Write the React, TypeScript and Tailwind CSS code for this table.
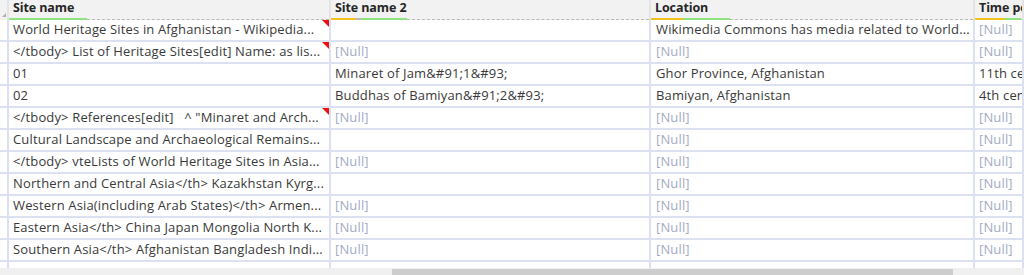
import React from 'react';

type Cell = { text: string; nul?: boolean; mark?: boolean };

const N: Cell = { text: '[Null]', nul: true };
const E: Cell = { text: '' };

const rows: Cell[][] = [
  [{ text: 'World Heritage Sites in Afghanistan - Wikipedia...', mark: true }, E, { text: 'Wikimedia Commons has media related to World...' }, N],
  [{ text: '</tbody> List of Heritage Sites[edit] Name: as lis...', mark: true }, N, N, N],
  [{ text: '01' }, { text: 'Minaret of Jam&#91;1&#93;' }, { text: 'Ghor Province, Afghanistan' }, { text: '11th century' }],
  [{ text: '02' }, { text: 'Buddhas of Bamiyan&#91;2&#93;' }, { text: 'Bamiyan, Afghanistan' }, { text: '4th century' }],
  [{ text: '</tbody> References[edit]   ^ "Minaret and Arch...', mark: true }, N, N, N],
  [{ text: 'Cultural Landscape and Archaeological Remains...' }, E, N, N],
  [{ text: '</tbody> vteLists of World Heritage Sites in Asia...' }, N, N, N],
  [{ text: 'Northern and Central Asia</th> Kazakhstan Kyrg...' }, E, N, N],
  [{ text: 'Western Asia(including Arab States)</th> Armen...' }, N, N, N],
  [{ text: 'Eastern Asia</th> China Japan Mongolia North K...' }, N, N, N],
  [{ text: 'Southern Asia</th> Afghanistan Bangladesh Indi...' }, N, N, N],
];

const widths = ['w-[322px]', 'w-[320px]', 'w-[324px]', 'flex-1'];
const pads = ['pl-[4px]', 'pl-[4px]', 'pl-[5px]', 'pl-[4px]'];

const Underline = ({ yellow, green, gray }: { yellow: number; green: number; gray?: number }) => (
  <div className="flex items-end h-[3px]">
    {yellow > 0 && <div className="h-[2px] bg-[#f2c21b]" style={{ width: yellow }} />}
    {gray ? <div className="h-[2px] bg-[#b8b8b8]" style={{ width: gray }} /> : null}
    <div className="h-[2px] bg-[#8ee57f]" style={{ width: green }} />
    <div className="flex-1 h-[1px] border-b border-dashed border-[#b9b9b9]" />
  </div>
);

export default function App() {
  const headers = [
    { label: 'Site name', line: <Underline yellow={0} green={78} /> },
    { label: 'Site name 2', line: <Underline yellow={25} gray={5} green={46} /> },
    { label: 'Location', line: <Underline yellow={32} green={47} /> },
    { label: 'Time period', line: <Underline yellow={30} green={16} /> },
  ];

  return (
    <div
      className="w-[1024px] h-[275px] overflow-hidden bg-white flex flex-col text-[13px] tracking-[0.15px] text-[#3a3a3a]"
      style={{ fontFamily: '"Open Sans", "Noto Sans", Arial, sans-serif' }}
    >
      {/* header */}
      <div className="flex h-[20px] bg-[#f2f2f2] shrink-0">
        <div className="w-[9px] relative border-r-2 border-[#e4e4e4]">
          <div className="absolute right-[1px] bottom-[3px] w-0 h-0 border-b-[4px] border-b-[#b0b0b0] border-l-[4px] border-l-transparent" />
        </div>
        {headers.map((h, i) => (
          <div key={i} className={`${widths[i]} shrink-0 flex flex-col border-r-2 border-[#e4e4e4] overflow-hidden`}>
            <div className="h-[17px] pl-[4px] flex items-center font-bold text-[12.5px] tracking-[-0.1px] text-[#262626] whitespace-nowrap leading-none">
              {h.label}
            </div>
            {h.line}
          </div>
        ))}
      </div>

      {/* body */}
      {rows.map((r, ri) => (
        <div key={ri} className="flex h-[22px] shrink-0 border-b-2 border-[#dbe1f0]">
          <div className="w-[9px] border-r-2 border-[#dbe1f0]" />
          {r.map((c, ci) => (
            <div
              key={ci}
              className={`${widths[ci]} shrink-0 relative flex items-center ${pads[ci]} pr-[2px] whitespace-pre overflow-hidden border-r-2 border-[#dbe1f0] ${
                c.nul ? 'text-[#a3abc4]' : ''
              }`}
            >
              {c.text}
              {c.mark && (
                <div className="absolute top-0 right-0 w-0 h-0 border-t-[7px] border-t-[#ee1111] border-l-[7px] border-l-transparent" />
              )}
            </div>
          ))}
        </div>
      ))}

      <div className="flex h-[6px] shrink-0">
        <div className="w-[9px] border-r-2 border-[#dbe1f0]" />
        {widths.map((w, i) => (
          <div key={i} className={`${w} shrink-0 border-r-2 border-[#dbe1f0]`} />
        ))}
      </div>

      {/* horizontal scrollbar */}
      <div className="flex-1 bg-[#f0f0f0] flex pt-[1px]">
        <div className="w-[392px] shrink-0" />
        <div className="w-[561px] bg-[#cdcdcd]" />
      </div>
    </div>
  );
}
